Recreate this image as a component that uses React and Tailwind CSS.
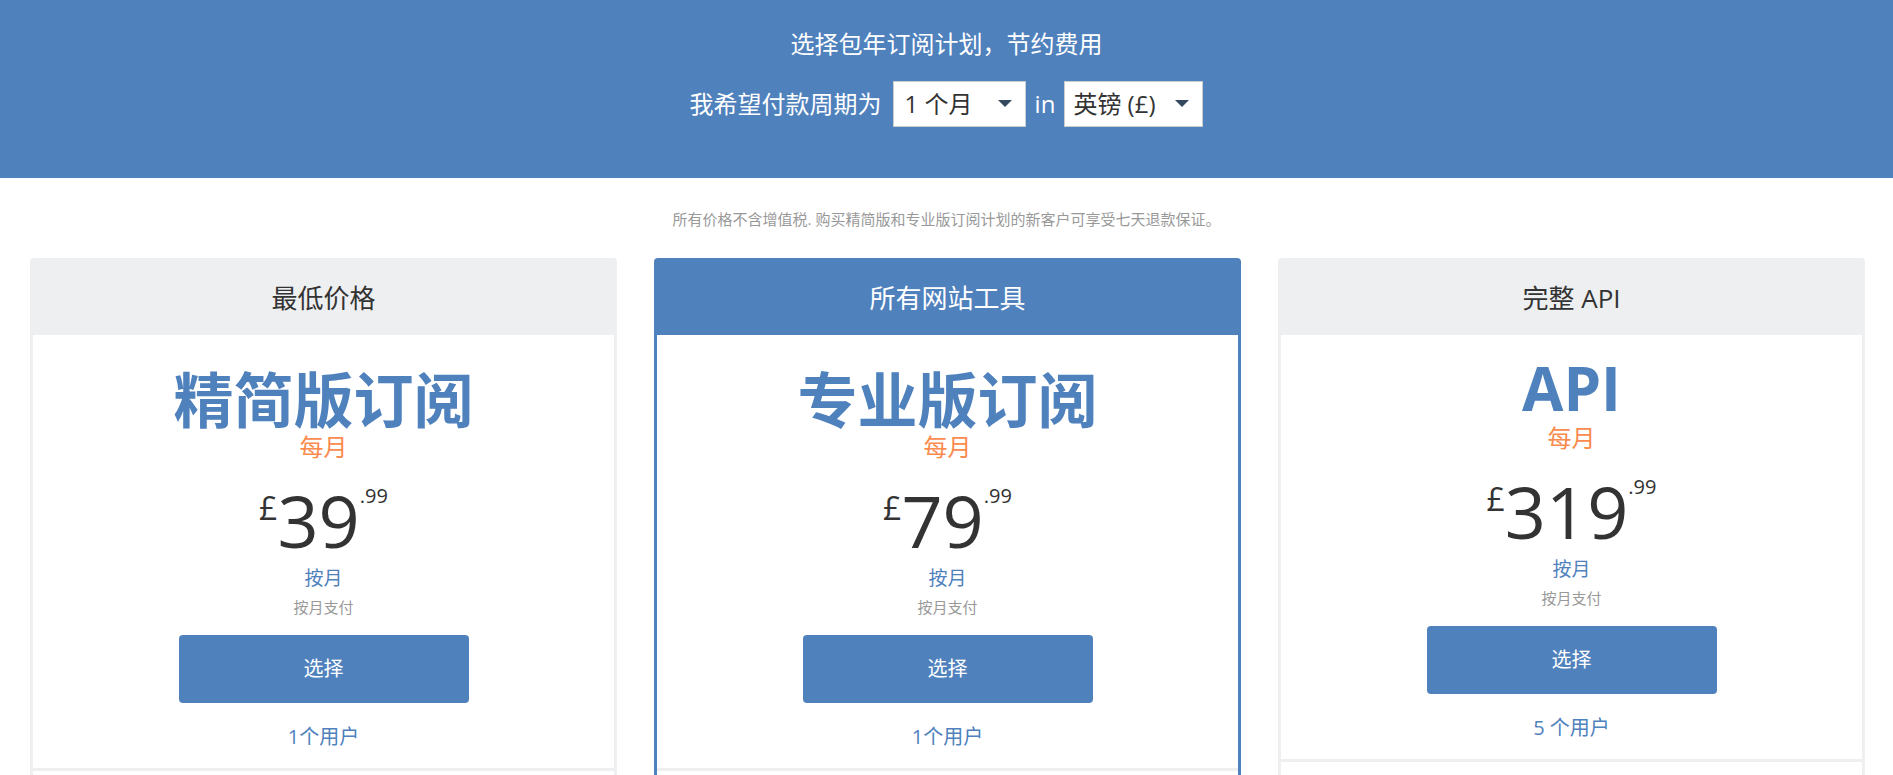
import React from 'react';

// pricing plans shown in the three columns
const plans = [
  { tag: '最低价格', name: '精简版订阅', price: '39', users: '1个用户', featured: false },
  { tag: '所有网站工具', name: '专业版订阅', price: '79', users: '1个用户', featured: true },
  { tag: '完整 API', name: 'API', price: '319', users: '5 个用户', featured: false, latin: true },
];

const Caret = () => (
  <svg width="14" height="8" viewBox="0 0 14 8" className="shrink-0">
    <path d="M0 0h14L7 7z" fill="#34495e" />
  </svg>
);

const FakeSelect = ({ value, className }) => (
  <div className={`h-[46px] bg-white border border-[#c9cdd2] flex items-center justify-between pr-[13px] text-[24px] leading-[30px] text-[#333] ${className}`}>
    <span>{value}</span>
    <Caret />
  </div>
);

const PlanCard = ({ plan }) => {
  const border = plan.featured ? 'border-[#4f81bd]' : 'border-[#eeeff0]';
  const head = plan.featured ? 'bg-[#4f81bd] text-white' : 'bg-[#eeeff0] text-[#333]';

  return (
    <div className={`rounded-t-[4px] border-[3px] border-b-0 ${border} bg-white`}>
      <div className={`h-[74px] flex items-center justify-center text-[26px] leading-[34px] ${head}`}>{plan.tag}</div>

      <div className="flex flex-col items-center pt-[30px]">
        {plan.latin ? (
          <div className="h-[61px] text-[60px] leading-[47px] font-bold text-[#4f81bd]">{plan.name}</div>
        ) : (
          <div className="h-[70px] text-[60px] leading-[70px] font-bold text-[#4f81bd]">{plan.name}</div>
        )}
        <div className="text-[24px] leading-[24px] text-[#fb8a4f]">每月</div>

        <div className="mt-[25px] flex items-start text-[#333]">
          <span className="mt-[8px] text-[32px] leading-[32px]">£</span>
          <span className="text-[72px] leading-[72px]">{plan.price}</span>
          <span className="mt-[2px] text-[20px] leading-[20px]">.99</span>
        </div>

        <div className="mt-[10px] text-[19px] leading-[24px] text-[#4f81bd]">按月</div>
        <div className="mt-[7px] text-[15px] leading-[20px] text-[#999]">按月支付</div>

        <button className="mt-[18px] w-[290px] h-[68px] rounded-[4px] bg-[#4f81bd] text-white text-[20px]">选择</button>

        <div className="mt-[22px] mb-[19px] text-[20px] leading-[24px] text-[#4f81bd]">{plan.users}</div>
      </div>

      <div className="border-t-[3px] border-[#eeeff0] h-[48px]" />
    </div>
  );
};

export default function App() {
  return (
    <div className="min-h-screen bg-white font-['Open_Sans','Noto_Sans_CJK_SC',sans-serif]">
      <div className="h-[178px] bg-[#4f81bd] flex flex-col items-center pt-[28px] text-white">
        <div className="text-[24px] leading-[32px]">选择包年订阅计划，节约费用</div>
        <div className="mt-[21px] flex items-center text-[24px] leading-[30px]">
          <span>我希望付款周期为</span>
          <FakeSelect value="1 个月" className="ml-[11px] w-[133px] pl-[11px]" />
          <span className="mx-[9px]">in</span>
          <FakeSelect value="英镑 (£)" className="w-[139px] pl-[8px]" />
        </div>
      </div>

      <p className="mt-[31px] text-center text-[15px] leading-[20px] text-[#999]">
        所有价格不含增值税. 购买精简版和专业版订阅计划的新客户可享受七天退款保证。
      </p>

      <div className="mt-[29px] grid grid-cols-3 gap-x-[37px] pl-[30px] pr-[28px]">
        {plans.map((p) => (
          <PlanCard key={p.tag} plan={p} />
        ))}
      </div>
    </div>
  );
}
